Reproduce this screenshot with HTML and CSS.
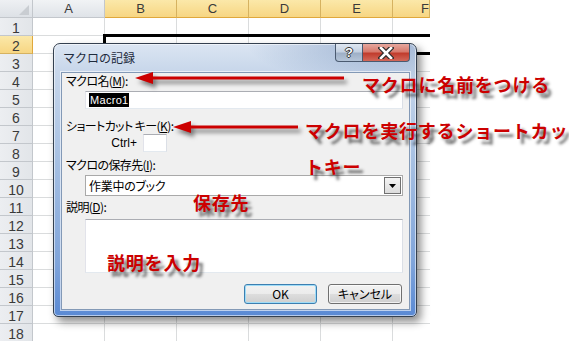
FILE: index.html
```html
<!DOCTYPE html>
<html lang="ja">
<head>
<meta charset="utf-8">
<title>マクロの記録</title>
<link rel="stylesheet" href="styles.css">
</head>
<body>
<div class="screen">
  <div class="sheet">
    <div class="col-head-row">
      <div class="corner"><span class="corner-tri"></span></div>
      <div class="col-head">A</div>
      <div class="col-head sel">B</div>
      <div class="col-head sel">C</div>
      <div class="col-head sel">D</div>
      <div class="col-head sel">E</div>
      <div class="col-head sel last">F</div>
    </div>
    <div class="sheet-body">
      <div class="row-heads">
        <div class="row-head">1</div>
        <div class="row-head sel">2</div>
        <div class="row-head">3</div>
        <div class="row-head">4</div>
        <div class="row-head">5</div>
        <div class="row-head">6</div>
        <div class="row-head">7</div>
        <div class="row-head">8</div>
        <div class="row-head">9</div>
        <div class="row-head">10</div>
        <div class="row-head">11</div>
        <div class="row-head">12</div>
        <div class="row-head">13</div>
        <div class="row-head">14</div>
        <div class="row-head">15</div>
        <div class="row-head">16</div>
        <div class="row-head">17</div>
        <div class="row-head">18</div>
      </div>
      <div class="cells">
        <div class="selection"></div>
      </div>
    </div>
  </div>

  <div class="dialog">
    <div class="titlebar">
      <span class="title">マクロの記録</span>
      <div class="caption-buttons">
        <span class="cap-btn help">?</span>
        <span class="cap-btn close"><svg width="16" height="12" viewBox="0 0 16 12"><path d="M3 1 L13 11 M13 1 L3 11" stroke="#2b2b2b" stroke-width="5" stroke-linecap="square"/><path d="M3 1 L13 11 M13 1 L3 11" stroke="#fff" stroke-width="2.6" stroke-linecap="square"/></svg></span>
      </div>
    </div>
    <div class="client">
      <div class="label first">マクロ名(<u>M</u>):</div>
      <div class="textbox name-box"><span class="selected-text">Macro1</span></div>
      <div class="label short-label">ショートカット キー(<u>K</u>):</div>
      <div class="ctrl-row"><span class="ctrl">Ctrl+</span><span class="textbox key-box"></span></div>
      <div class="label store-label">マクロの保存先(<u>I</u>):</div>
      <div class="combo"><span class="combo-text">作業中のブック</span><span class="drop"><svg width="7" height="4" viewBox="0 0 7 4"><path d="M0 0 H7 L3.5 4 Z" fill="#000"/></svg></span></div>
      <div class="label desc-label">説明(<u>D</u>):</div>
      <div class="textbox desc-box"></div>
      <div class="actions">
        <button class="btn default">OK</button>
        <button class="btn">キャンセル</button>
      </div>
    </div>
  </div>

  <svg class="arrow arrow-one" width="215" height="20" viewBox="0 0 215 20"><path d="M18 8.5 H211 V11.5 H18 Z" fill="#cc0000"/><path d="M2 10 L20 4 L20 16 Z" fill="#cc0000"/></svg>
  <svg class="arrow arrow-two" width="130" height="20" viewBox="0 0 130 20"><path d="M18 8.5 H127 V11.5 H18 Z" fill="#cc0000"/><path d="M2 10 L20 4 L20 16 Z" fill="#cc0000"/></svg>

  <div class="note note-name">マクロに名前をつける</div>
  <div class="note note-short">マクロを実行するショートカッ<br>トキー</div>
  <div class="note note-store">保存先</div>
  <div class="note note-desc">説明を入力</div>
</div>
</body>
</html>
```

FILE: styles.css
```css
html, body {
  margin: 0;
  padding: 0;
  background: #fff;
}

body {
  font-family: "Noto Sans CJK JP", "Liberation Sans", sans-serif;
}

.screen {
  position: relative;
  width: 569px;
  height: 341px;
  overflow: hidden;
  background: #fff;
}

/* ---------- spreadsheet ---------- */
.sheet {
  width: 430px;
  height: 341px;
  overflow: hidden;
  font-family: "Liberation Sans", Arial, sans-serif;
  color: #3a3a3a;
}

.col-head-row {
  display: flex;
  height: 18px;
}

.corner {
  position: relative;
  flex: none;
  width: 33px;
  height: 18px;
  box-sizing: border-box;
  background: linear-gradient(#eef0f3, #dde1e6);
  border-right: 1px solid #c3c7cc;
  border-bottom: 1px solid #c3c7cc;
}

.corner-tri {
  position: absolute;
  right: 3px;
  bottom: 2px;
  width: 0;
  height: 0;
  border-left: 10px solid transparent;
  border-bottom: 10px solid #c9cdd2;
}

.col-head {
  flex: none;
  width: 72px;
  height: 18px;
  box-sizing: border-box;
  background: linear-gradient(#f1f3f5, #dfe3e8);
  border-right: 1px solid #c3c7cc;
  border-bottom: 1px solid #c3c7cc;
  text-align: center;
  font-size: 13px;
  line-height: 18px;
}

.col-head.sel {
  background: linear-gradient(#fbe8a9, #f7d683);
  border-right-color: #d6b260;
  border-bottom-color: #e0a83c;
}

.col-head.last {
  width: 37px;
  text-align: right;
}

.sheet-body {
  display: flex;
}

.row-heads {
  flex: none;
  width: 33px;
}

.row-head {
  height: 18px;
  box-sizing: border-box;
  background: linear-gradient(to right, #eceef1, #e2e5e9);
  border-right: 1px solid #c3c7cc;
  border-bottom: 1px solid #c3c7cc;
  text-align: center;
  font-size: 14px;
  line-height: 20px;
}

.row-head.sel {
  background: linear-gradient(#fbe8a9, #f7d683);
  border-right-color: #e0a83c;
  border-bottom-color: #d6b260;
}

.cells {
  position: relative;
  flex: 1;
  height: 323px;
  background-image:
    linear-gradient(to right, transparent 71px, #dadcdd 71px),
    linear-gradient(to bottom, transparent 17px, #dadcdd 17px);
  background-size: 72px 100%, 100% 18px;
}

.selection {
  position: absolute;
  left: 70px;
  top: 16px;
  width: 420px;
  height: 21px;
  box-sizing: border-box;
  border: 3px solid #000;
}

/* ---------- dialog ---------- */
.dialog {
  position: absolute;
  left: 53px;
  top: 43px;
  width: 364px;
  height: 274px;
  box-sizing: border-box;
  padding: 0 6px 6px 7px;
  border: 1px solid #34404f;
  border-radius: 7px 7px 5px 5px;
  background:
    radial-gradient(ellipse 140px 40px at 92% 0%, rgba(110, 140, 185, 0.55), rgba(110, 140, 185, 0) 100%),
    linear-gradient(#dbe5f2 0px, #c7d6ea 28px, #a5bfe2 120px, #7fa4da 220px, #5a8ad4 100%);
  box-shadow: inset 0 0 0 1px rgba(255, 255, 255, 0.55), 4px 5px 8px rgba(0, 0, 0, 0.45);
}

.titlebar {
  display: flex;
  justify-content: space-between;
  align-items: flex-start;
  height: 28px;
}

.title {
  padding: 6px 0 0 2px;
  font-size: 12px;
  line-height: 16px;
  color: #1e2b3c;
}

.caption-buttons {
  display: flex;
}

.cap-btn {
  display: flex;
  align-items: center;
  justify-content: center;
  height: 18px;
  box-sizing: border-box;
  border: 1px solid #4a5a70;
  border-top: none;
}

.cap-btn.help {
  width: 28px;
  border-radius: 0 0 0 4px;
  background: linear-gradient(#dfe7f1 0%, #c4d1e2 45%, #9fb0c7 55%, #b4c4d8 100%);
  color: #fff;
  font-family: "Liberation Sans", Arial, sans-serif;
  font-weight: bold;
  font-size: 13px;
  line-height: 16px;
  text-shadow: 1px 0 0 #333, -1px 0 0 #333, 0 1px 0 #333, 0 -1px 0 #333;
}

.cap-btn.close {
  width: 47px;
  border-left: none;
  border-radius: 0 0 4px 0;
  background: linear-gradient(#e6a79d 0%, #d77a6d 45%, #c13c2d 55%, #d2685a 100%);
}

.client {
  height: 238px;
  box-sizing: border-box;
  padding: 0 6px 0 4px;
  border: 1px solid #8399b6;
  background: #f0f0f0;
  box-shadow: 0 0 0 1px rgba(255, 255, 255, 0.6);
  font-size: 12px;
  color: #000;
}

.label {
  font-size: 12px;
  line-height: 14px;
  height: 14px;
  font-feature-settings: "palt";
  letter-spacing: -0.6px;
  white-space: nowrap;
}

.label u {
  text-decoration-thickness: 1px;
  text-underline-offset: 1px;
}

.label.first { margin-top: 1px; }
.label.short-label { margin-top: 10px; }
.label.store-label { margin-top: 6px; }
.label.desc-label { margin-top: 4px; }

.textbox {
  box-sizing: border-box;
  border: 1px solid #abadb3;
  border-color: #abadb3 #dbdfe6 #e3e9ef #e2e3ea;
  background: #fff;
}

.name-box {
  display: flex;
  align-items: center;
  margin: 3px 0 0 19px;
  height: 18px;
  padding-left: 3px;
}

.selected-text {
  background: #000;
  color: #fff;
  font-family: "Liberation Sans", Arial, sans-serif;
  font-size: 11px;
  letter-spacing: 0.3px;
  line-height: 14px;
  padding: 0 1px;
}

.ctrl-row {
  display: flex;
  align-items: center;
  margin-top: 1px;
  height: 18px;
}

.ctrl {
  width: 71px;
  padding-right: 6px;
  text-align: right;
  font-family: "Liberation Sans", Arial, sans-serif;
  font-size: 12px;
}

.key-box {
  width: 24px;
  height: 18px;
}

.combo {
  display: flex;
  align-items: center;
  justify-content: space-between;
  margin: 3px 0 0 19px;
  height: 21px;
  box-sizing: border-box;
  border: 1px solid #a9a9a9;
  background: #fff;
}

.combo-text {
  padding-left: 3px;
  font-size: 12px;
  line-height: 14px;
  font-feature-settings: "palt";
  letter-spacing: -0.3px;
}

.drop {
  display: flex;
  align-items: center;
  justify-content: center;
  width: 17px;
  height: 17px;
  margin-right: 1px;
  box-sizing: border-box;
  border: 1px solid #707070;
  background: linear-gradient(#f4f4f4, #dcdcdc);
}

.desc-box {
  margin: 5px 0 0 19px;
  height: 54px;
}

.actions {
  display: flex;
  justify-content: flex-end;
  gap: 11px;
  margin: 11px 1px 0 0;
}

.btn {
  height: 20px;
  margin: 0;
  padding: 0;
  box-sizing: border-box;
  border: 1px solid #707070;
  border-radius: 3px;
  background: linear-gradient(#f2f2f2 0%, #ebebeb 50%, #dddddd 51%, #cfcfcf 100%);
  box-shadow: inset 0 0 0 1px rgba(255, 255, 255, 0.7);
  font-family: "Noto Sans CJK JP", sans-serif;
  font-size: 12px;
  line-height: 16px;
  color: #000;
  width: 74px;
  font-feature-settings: "palt";
}

.btn.default {
  width: 73px;
  border-color: #3c7fb1;
  box-shadow: inset 0 0 0 1px #9fdcf7;
}

/* ---------- annotations ---------- */
.arrow {
  position: absolute;
  filter: drop-shadow(3px 4px 2px rgba(0, 0, 0, 0.5));
}

.arrow-one {
  left: 133px;
  top: 68px;
}

.arrow-two {
  left: 171px;
  top: 117px;
}

.note {
  position: absolute;
  color: #cc0000;
  font-family: "Noto Sans CJK JP", sans-serif;
  font-weight: 700;
  font-size: 18px;
  line-height: 18px;
  letter-spacing: 0.8px;
  white-space: nowrap;
  text-shadow: 4px 5px 3px rgba(30, 30, 30, 0.65);
}

.note-name {
  left: 362px;
  top: 75px;
}

.note-short {
  left: 305px;
  top: 121px;
  line-height: 36px;
  margin-top: -9px;
}

.note-store {
  left: 193px;
  top: 193px;
}

.note-desc {
  left: 107px;
  top: 253px;
}
```
